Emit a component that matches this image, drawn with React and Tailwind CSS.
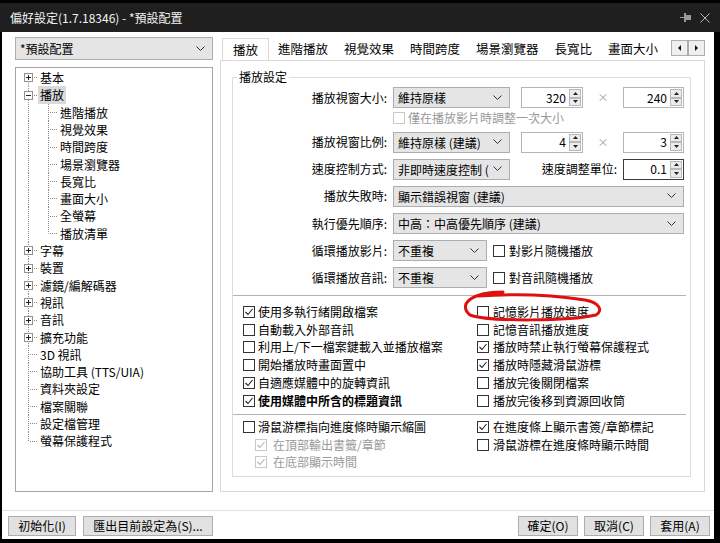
import React from 'react'

const tree = [
    { t: '基本', exp: '+' },
    { t: '播放', exp: '-', sel: true },
    { t: '進階播放', child: true },
    { t: '視覺效果', child: true },
    { t: '時間跨度', child: true },
    { t: '場景瀏覽器', child: true },
    { t: '長寬比', child: true },
    { t: '畫面大小', child: true },
    { t: '全螢幕', child: true },
    { t: '播放清單', child: true, lastChild: true },
    { t: '字幕', exp: '+' },
    { t: '裝置', exp: '+' },
    { t: '濾鏡/編解碼器', exp: '+' },
    { t: '視訊', exp: '+' },
    { t: '音訊', exp: '+' },
    { t: '擴充功能', exp: '+' },
    { t: '3D 視訊' },
    { t: '協助工具 (TTS/UIA)' },
    { t: '資料夾設定' },
    { t: '檔案關聯' },
    { t: '設定檔管理' },
    { t: '螢幕保護程式', last: true },
]

const tabs = ['進階播放', '視覺效果', '時間跨度', '場景瀏覽器', '長寬比', '畫面大小']

const leftChecks = [
    { t: '使用多執行緒開啟檔案', c: true },
    { t: '自動載入外部音訊' },
    { t: '利用上/下一檔案鍵載入並播放檔案' },
    { t: '開始播放時畫面置中' },
    { t: '自適應媒體中的旋轉資訊', c: true },
    { t: '使用媒體中所含的標題資訊', c: true, bold: true },
]

const rightChecks = [
    { t: '記憶影片播放進度' },
    { t: '記憶音訊播放進度' },
    { t: '播放時禁止執行螢幕保護程式', c: true },
    { t: '播放時隱藏滑鼠游標', c: true },
    { t: '播放完後關閉檔案' },
    { t: '播放完後移到資源回收筒' },
]

// whole-pixel row heights averaging 17.3px
const rowH = i => Math.round(17.3 * (i + 1)) - Math.round(17.3 * i)

function TreeGutter({ row, first, h }) {
    const mid = Math.floor(h / 2) + 0.5
    const dot = { stroke: '#8a8a8a', strokeDasharray: '1 1', strokeWidth: 1 }
    if (row.child) {
        return (
            <svg width="42" height={h} className="shrink-0">
                <line x1="12.5" y1="0" x2="12.5" y2={h} {...dot} />
                <line x1="32.5" y1="0" x2="32.5" y2={row.lastChild ? mid : h} {...dot} />
                <line x1="34" y1={mid} x2="41" y2={mid} {...dot} />
            </svg>
        )
    }
    return (
        <svg width="22" height={h} className="shrink-0">
            <line x1="12.5" y1={first ? mid : 0} x2="12.5" y2={row.last ? mid : h} {...dot} />
            <line x1="14" y1={mid} x2="22" y2={mid} {...dot} />
            {row.exp && (
                <>
                    <rect x="8.5" y={mid - 4} width="8" height="8" fill="#fff" stroke="#919191" />
                    <line x1="10" y1={mid} x2="15" y2={mid} stroke="#222" />
                    {row.exp == '+' && <line x1="12.5" y1={mid - 2.5} x2="12.5" y2={mid + 2.5} stroke="#222" />}
                </>
            )}
        </svg>
    )
}

function Chevron() {
    return (
        <svg width="9" height="6" viewBox="0 0 9 6" className="shrink-0">
            <path d="M0.5 0.5 L4.5 4.5 L8.5 0.5" fill="none" stroke="#333" strokeWidth="1" />
        </svg>
    )
}

function Combo({ value, className }) {
    return (
        <div className={`h-[21px] flex items-center bg-[#e5e5e5] border border-[#adadad] pl-[4px] pr-[7px] gap-[4px] shrink-0 ${className}`}>
            <span className="flex-1 min-w-0 overflow-hidden whitespace-nowrap text-[12px] leading-[17px] text-black">{value}</span>
            <Chevron />
        </div>
    )
}

function SpinBtn({ up }) {
    return (
        <div className="flex-1 bg-[#ececec] border border-[#b8b8b8] flex items-center justify-center">
            <svg width="5" height="3" viewBox="0 0 5 3">
                <path d={up ? 'M0 3 L2.5 0 L5 3 Z' : 'M0 0 L2.5 3 L5 0 Z'} fill="#222" />
            </svg>
        </div>
    )
}

function Spin({ value, dark, className }) {
    return (
        <div className={`h-[21px] flex bg-white border shrink-0 ${dark ? 'border-[#3c3c3c]' : 'border-[#b5b5b5]'} ${className}`}>
            <div className="flex-1 flex items-center justify-end pr-[3px] text-[12px] leading-none text-black">{value}</div>
            <div className="w-[13px] flex flex-col py-[1px] pr-[1px]">
                <SpinBtn up />
                <SpinBtn />
            </div>
        </div>
    )
}

function Box({ checked, disabled }) {
    return (
        <span className={`w-[12px] h-[12px] border bg-white flex items-center justify-center shrink-0 ${disabled ? 'border-[#c8c8c8]' : 'border-[#333]'}`}>
            {checked && (
                <svg width="10" height="10" viewBox="0 0 10 10">
                    <path d="M1.5 5 L4 7.5 L8.5 2" fill="none" stroke={disabled ? '#b4b4b4' : '#222'} strokeWidth="1.1" />
                </svg>
            )}
        </span>
    )
}

function Check({ t, c, bold, disabled, gap = 'gap-[3px]', className = '' }) {
    return (
        <div className={`h-[17.8px] flex items-center ${gap} ${className}`}>
            <Box checked={c} disabled={disabled} />
            <span className={`text-[12px] leading-none whitespace-nowrap ${disabled ? 'text-[#9a9a9a]' : 'text-black'} ${bold ? 'font-bold' : ''}`}>{t}</span>
        </div>
    )
}

function Label({ children }) {
    return <span className="w-[154px] shrink-0 text-right text-[12px] leading-none text-black">{children}</span>
}

function Btn({ children, className }) {
    return (
        <button className={`h-[20px] bg-[#e1e1e1] border border-[#adadad] text-[12px] leading-none text-black flex items-center justify-center ${className}`}>
            {children}
        </button>
    )
}

function App() {
    return (
        <div className="w-[720px] h-[543px] bg-black flex flex-col overflow-hidden font-['Noto_Sans_CJK_TC','Noto_Sans',sans-serif]">
            {/* title bar */}
            <div className="h-[32px] shrink-0 border-t-[3px] border-black bg-[#1f1f1f] flex items-center pl-[10px] pr-[10px]">
                <span className="text-[12px] leading-none text-[#f2f2f2]">偏好設定(1.7.18346) - *預設配置</span>
                <div className="ml-auto flex items-center gap-[9px]">
                    <svg width="11" height="9" viewBox="0 0 11 9">
                        <line x1="0" y1="4.5" x2="4" y2="4.5" stroke="#9a9a9a" />
                        <rect x="4" y="0" width="2" height="9" fill="#9a9a9a" />
                        <rect x="6" y="2" width="5" height="5" fill="#9a9a9a" />
                    </svg>
                    <svg width="10" height="10" viewBox="0 0 10 10">
                        <path d="M0.5 0.5 L9.5 9.5 M9.5 0.5 L0.5 9.5" stroke="#b8b8b8" strokeWidth="1" />
                    </svg>
                </div>
            </div>

            {/* body */}
            <div className="relative flex-1 bg-white ml-[2px] mr-[6px] mb-[4px] flex flex-col">
                <div className="h-[455px] mt-[5px] flex pl-[13px] gap-[7px]">
                    {/* left column */}
                    <div className="w-[198px] flex flex-col">
                        <Combo value="*預設配置" className="!h-[23px] w-full" />
                        <div className="mt-[7px] flex-1 border border-[#a5a5a5] bg-white pt-[1px] flex flex-col">
                            {tree.map((row, i) => (
                                <div key={row.t} className="flex items-center shrink-0" style={{ height: rowH(i) }}>
                                    <TreeGutter row={row} first={i == 0} h={rowH(i)} />
                                    <span className={`h-full flex items-center px-[2px] text-[12px] leading-none whitespace-nowrap text-black ${row.sel ? 'bg-[#dadada]' : ''}`}>{row.t}</span>
                                </div>
                            ))}
                        </div>
                    </div>

                    {/* tabs */}
                    <div className="w-[485px] flex flex-col">
                        <div className="h-[23px] flex items-end">
                            <div className="flex-1 min-w-0 overflow-hidden flex items-end">
                                <div className="relative z-10 -mb-px ml-[2px] h-[23px] px-[10px] bg-white border border-b-0 border-[#d9d9d9] flex items-center text-[12.5px] leading-none text-black shrink-0">播放</div>
                                <div className="flex items-center h-[22px] pl-[1px]">
                                    {tabs.map(t => (
                                        <span key={t} className="px-[8px] text-[12.5px] leading-[16px] text-black whitespace-nowrap">{t}</span>
                                    ))}
                                </div>
                            </div>
                            <div className="flex mb-[4px] ml-[2px] shrink-0">
                                {[0, 1].map(k => (
                                    <div key={k} className="w-[17px] h-[16px] bg-[#f0f0f0] border border-[#adadad] flex items-center justify-center">
                                        <svg width="3" height="6" viewBox="0 0 3 6">
                                            <path d={k == 0 ? 'M3 0 L0 3 L3 6 Z' : 'M0 0 L3 3 L0 6 Z'} fill="#111" />
                                        </svg>
                                    </div>
                                ))}
                            </div>
                        </div>

                        <div className="flex-1 border border-[#d9d9d9] bg-white pl-[11px] pr-[13px] pt-[8px]">
                            <fieldset className="min-w-0 border border-[#dcdcdc] pb-[5px]">
                                <legend className="ml-[4px] px-[2px] text-[12px] leading-[16px] text-black">播放設定</legend>

                                <div className="flex items-center h-[21px] mt-[2px]">
                                    <Label>播放視窗大小:</Label>
                                    <Combo value="維持原樣" className="w-[117px] ml-[6px]" />
                                    <Spin value="320" className="w-[62px] ml-[11px]" />
                                    <span className="w-[40px] text-center text-[11px] leading-none text-[#a0a0a0]">×</span>
                                    <Spin value="240" className="w-[61px]" />
                                </div>
                                <Check t="僅在播放影片時調整一次大小" disabled className="!h-[20px] ml-[160px]" />

                                <div className="flex flex-col gap-[6.2px] mt-[3.5px]">
                                    <div className="flex items-center h-[21px]">
                                        <Label>播放視窗比例:</Label>
                                        <Combo value="維持原樣 (建議)" className="w-[117px] ml-[6px]" />
                                        <Spin value="4" className="w-[62px] ml-[11px]" />
                                        <span className="w-[40px] text-center text-[11px] leading-none text-[#a0a0a0]">×</span>
                                        <Spin value="3" className="w-[61px]" />
                                    </div>
                                    <div className="flex items-center h-[21px]">
                                        <Label>速度控制方式:</Label>
                                        <Combo value="非即時速度控制 (" className="w-[117px] ml-[6px]" />
                                        <span className="w-[107px] text-right text-[12px] leading-none text-black">速度調整單位:</span>
                                        <Spin value="0.1" dark className="w-[61px] ml-[6px]" />
                                    </div>
                                    <div className="flex items-center h-[21px]">
                                        <Label>播放失敗時:</Label>
                                        <Combo value="顯示錯誤視窗 (建議)" className="w-[291px] ml-[6px]" />
                                    </div>
                                    <div className="flex items-center h-[21px]">
                                        <Label>執行優先順序:</Label>
                                        <Combo value="中高：中高優先順序 (建議)" className="w-[291px] ml-[6px]" />
                                    </div>
                                    <div className="flex items-center h-[21px]">
                                        <Label>循環播放影片:</Label>
                                        <Combo value="不重複" className="w-[94px] ml-[6px]" />
                                        <Check t="對影片隨機播放" gap="gap-[4px]" className="ml-[6px]" />
                                    </div>
                                    <div className="flex items-center h-[21px]">
                                        <Label>循環播放音訊:</Label>
                                        <Combo value="不重複" className="w-[94px] ml-[6px]" />
                                        <Check t="對音訊隨機播放" gap="gap-[4px]" className="ml-[6px]" />
                                    </div>
                                </div>

                                <div className="h-px bg-[#b4b4b4] mt-[6.5px] mr-[4px]" />

                                <div className="flex mt-[7px]">
                                    <div className="w-[244px] pl-[10px] flex flex-col">
                                        {leftChecks.map(c => <Check key={c.t} {...c} />)}
                                    </div>
                                    <div className="flex-1 flex flex-col">
                                        {rightChecks.map(c => <Check key={c.t} {...c} gap="gap-[4px]" />)}
                                    </div>
                                </div>

                                <div className="h-px bg-[#b4b4b4] mt-[4px] mr-[4px]" />

                                <div className="flex mt-[3.2px]">
                                    <div className="w-[244px] pl-[10px] flex flex-col">
                                        <Check t="滑鼠游標指向進度條時顯示縮圖" />
                                        <Check t="在頂部輸出書籤/章節" c disabled gap="gap-[6px]" className="ml-[12px]" />
                                        <Check t="在底部顯示時間" c disabled gap="gap-[6px]" className="ml-[12px]" />
                                    </div>
                                    <div className="flex-1 flex flex-col">
                                        <Check t="在進度條上顯示書簽/章節標記" c gap="gap-[4px]" />
                                        <Check t="滑鼠游標在進度條時顯示時間" gap="gap-[4px]" />
                                    </div>
                                </div>
                            </fieldset>
                        </div>
                    </div>
                </div>

                {/* bottom bar */}
                <div className="h-px bg-[#e3e3e3] mt-[18px]" />
                <div className="mt-[5px] h-[20px] flex pl-[6px] pr-[4px]">
                    <Btn className="w-[68px]">初始化(I)</Btn>
                    <Btn className="w-[130px] ml-[7px]">匯出目前設定為(S)...</Btn>
                    <div className="ml-auto flex gap-[6px]">
                        <Btn className="w-[60px]">確定(O)</Btn>
                        <Btn className="w-[60px]">取消(C)</Btn>
                        <Btn className="w-[60px]">套用(A)</Btn>
                    </div>
                </div>

                {/* red marker annotation */}
                <svg width="160" height="45" className="absolute left-[453px] top-[253px] pointer-events-none">
                    <path
                        d="M48 7 C15 7, 3 20, 15 30 C35 37, 115 36, 141 30 C149 25, 143 17, 130 15 C105 11, 65 8, 23 11"
                        fill="none" stroke="#e01010" strokeWidth="3" strokeLinecap="round"
                    />
                </svg>
            </div>
        </div>
    )
}

export default App
